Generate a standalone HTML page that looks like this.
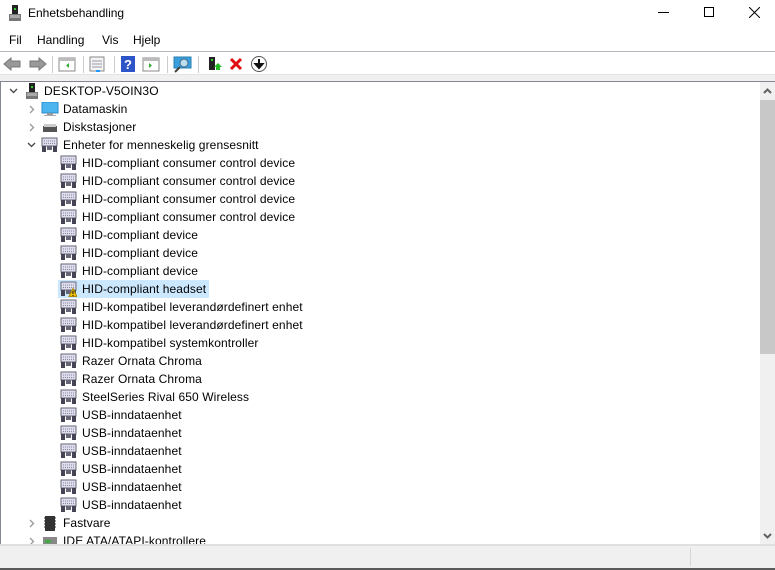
<!DOCTYPE html><html><head><style>
*{margin:0;padding:0;box-sizing:border-box}
body{width:775px;height:570px;overflow:hidden;background:#fff;font-family:"Liberation Sans",sans-serif;font-size:12px;color:#000;position:relative}
.a{position:absolute}
.row{position:absolute;height:18px;line-height:18px;white-space:nowrap;letter-spacing:0.1px}
</style></head><body>
<svg class="a" style="left:7px;top:5px" width="16" height="18"><rect x="5" y="0" width="6" height="9" fill="#222"/><rect x="7" y="3" width="2" height="2" fill="#3c3"/><rect x="2" y="9" width="12" height="7" fill="#777"/><rect x="3" y="10" width="10" height="3" fill="#aaa"/></svg>
<div class="a" style="left:28px;top:6px;font-size:12px">Enhetsbehandling</div>
<div class="a" style="left:658px;top:12px;width:11px;height:1px;background:#000"></div>
<div class="a" style="left:704px;top:7px;width:10px;height:10px;border:1px solid #000"></div>
<svg class="a" style="left:749px;top:7px" width="11" height="11"><path d="M0 0L11 11M11 0L0 11" stroke="#000" stroke-width="1"/></svg>
<div class="a" style="left:9px;top:33px">Fil</div>
<div class="a" style="left:37px;top:33px">Handling</div>
<div class="a" style="left:102px;top:33px">Vis</div>
<div class="a" style="left:133px;top:33px">Hjelp</div>
<div class="a" style="left:0;top:51px;width:775px;height:1px;background:#b5b9bf"></div>
<svg class="a" style="left:3px;top:55px" width="270" height="18">
<path d="M1 9L8 3V6H17V12H8V15Z" fill="#999" stroke="#777"/>
<path d="M43 9L36 3V6H27V12H36V15Z" fill="#999" stroke="#777"/>
<line x1="49.5" y1="1" x2="49.5" y2="18" stroke="#ccc"/>
<rect x="56" y="3" width="16" height="13" fill="#fff" stroke="#888"/><rect x="56" y="3" width="16" height="3" fill="#bbb"/><path d="M66 8L63 10.5L66 13Z" fill="#3a3"/>
<line x1="80.5" y1="1" x2="80.5" y2="18" stroke="#ccc"/>
<rect x="87" y="2" width="14" height="14" fill="#f4f4f4" stroke="#888"/><path d="M89 6H99M89 9H99M89 12H99" stroke="#99a"/><rect x="93" y="15" width="4" height="2" fill="#29f"/>
<line x1="111.5" y1="1" x2="111.5" y2="18" stroke="#ccc"/>
<rect x="118" y="1" width="14" height="16" fill="#2e55c7"/><text x="121" y="14" fill="#fff" font-size="13" font-weight="bold" font-family="Liberation Sans">?</text>
<rect x="140" y="3" width="16" height="13" fill="#fff" stroke="#888"/><rect x="140" y="3" width="16" height="3" fill="#bbb"/><path d="M146 8L149 10.5L146 13Z" fill="#3a3"/>
<line x1="164.5" y1="1" x2="164.5" y2="18" stroke="#ccc"/>
<rect x="171" y="2" width="17" height="11" fill="#3aa0dd" stroke="#2a7fb0"/><circle cx="181" cy="8" r="4" fill="#bde" stroke="#468"/><path d="M177 12L172 17" stroke="#444" stroke-width="2"/>
<line x1="195.5" y1="1" x2="195.5" y2="18" stroke="#ccc"/>
<rect x="206" y="2" width="6" height="13" fill="#222"/><rect x="208" y="4" width="2" height="2" fill="#3c3"/><path d="M211 12L215 8L219 12Z M213 12H217V15H213Z" fill="#2b2"/>
<path d="M228 4L238 14M238 4L228 14" stroke="#e01010" stroke-width="3"/>
<circle cx="256" cy="9" r="7.5" fill="#fff" stroke="#555"/><path d="M256 4V10M252.5 9L256 13L259.5 9Z" stroke="#111" stroke-width="2" fill="#111"/>
</svg>
<div class="a" style="left:0;top:74px;width:775px;height:7px;background:#f0f0f0;border-top:1px solid #e3e3e3"></div>
<div class="a" style="left:0;top:81px;width:775px;height:1px;background:#828790"></div>
<div class="a" style="left:0;top:82px;width:1px;height:462px;background:#828790"></div>
<div class="a" style="left:760px;top:82px;width:15px;height:462px;background:#f0f0f0"></div>
<div class="a" style="left:760px;top:100px;width:15px;height:254px;background:#c8c8c8"></div>
<svg class="a" style="left:763px;top:87px" width="9" height="8"><path d="M1 6L4.5 2.5L8 6" stroke="#606060" stroke-width="2" fill="none"/></svg>
<svg class="a" style="left:763px;top:532px" width="9" height="8"><path d="M1 2L4.5 5.5L8 2" stroke="#606060" stroke-width="2" fill="none"/></svg>
<div class="a" style="left:0;top:544px;width:775px;height:24px;background:#f0f0f0;border-top:2px solid #e0e0e0"></div>
<div class="a" style="left:690px;top:548px;width:1px;height:18px;background:#d6d6d6"></div>
<div class="a" style="left:0;top:568px;width:775px;height:2px;background:#5a5a5a"></div>
<div class="a" style="left:1px;top:82px;width:759px;height:462px;overflow:hidden">
<svg class="a" style="left:8px;top:6px" width="9" height="6"><path d="M1 1L4.5 4.5L8 1" stroke="#444" stroke-width="1.3" fill="none"/></svg>
<svg class="a" style="left:23px;top:1px" width="16" height="17"><rect x="5" y="0" width="6" height="9" fill="#222"/><rect x="7" y="3" width="2" height="2" fill="#3c3"/><rect x="2" y="9" width="12" height="7" fill="#777"/><rect x="3" y="10" width="10" height="3" fill="#aaa"/></svg>
<div class="row" style="left:43px;top:0">DESKTOP-V5OIN3O</div>
<svg class="a" style="left:28px;top:23px" width="6" height="9"><path d="M1 1L4.5 4.5L1 8" stroke="#999" stroke-width="1.3" fill="none"/></svg>
<svg class="a" style="left:40px;top:20px" width="18" height="15"><rect x="1" y="0" width="16" height="11" fill="#4cb4ee" stroke="#2a8bcb"/><rect x="6" y="11" width="6" height="2" fill="#999"/><rect x="3" y="13" width="12" height="1" fill="#aaa"/></svg>
<div class="row" style="left:62px;top:18px">Datamaskin</div>
<svg class="a" style="left:28px;top:41px" width="6" height="9"><path d="M1 1L4.5 4.5L1 8" stroke="#999" stroke-width="1.3" fill="none"/></svg>
<svg class="a" style="left:41px;top:41px" width="16" height="10"><rect x="1" y="3" width="14" height="6" fill="#555"/><rect x="2" y="1" width="12" height="3" fill="#ccc"/></svg>
<div class="row" style="left:62px;top:36px">Diskstasjoner</div>
<svg class="a" style="left:26px;top:60px" width="9" height="6"><path d="M1 1L4.5 4.5L8 1" stroke="#444" stroke-width="1.3" fill="none"/></svg>
<div class="row" style="left:62px;top:54px">Enheter for menneskelig grensesnitt</div>
<div class="row" style="left:57px;top:198px;width:151px;background:#cce8ff"></div>
<svg class="a" style="left:28px;top:437px" width="6" height="9"><path d="M1 1L4.5 4.5L1 8" stroke="#999" stroke-width="1.3" fill="none"/></svg>
<svg class="a" style="left:43px;top:434px" width="12" height="15"><rect x="1" y="0" width="10" height="15" fill="#333"/><path d="M0 2H1M0 5H1M0 8H1M0 11H1M11 2H12M11 5H12M11 8H12M11 11H12" stroke="#333"/></svg>
<div class="row" style="left:62px;top:432px">Fastvare</div>
<svg class="a" style="left:28px;top:455px" width="6" height="9"><path d="M1 1L4.5 4.5L1 8" stroke="#999" stroke-width="1.3" fill="none"/></svg>
<svg class="a" style="left:41px;top:454px" width="16" height="10"><rect x="1" y="1" width="14" height="9" fill="#888"/><rect x="3" y="4" width="6" height="3" fill="#4a4"/></svg>
<div class="row" style="left:62px;top:450px">IDE ATA/ATAPI-kontrollere</div>
<div id="items"></div>
</div>
<script>
var n=["HID-compliant consumer control device","HID-compliant consumer control device","HID-compliant consumer control device","HID-compliant consumer control device","HID-compliant device","HID-compliant device","HID-compliant device","HID-compliant headset","HID-kompatibel leverandørdefinert enhet","HID-kompatibel leverandørdefinert enhet","HID-kompatibel systemkontroller","Razer Ornata Chroma","Razer Ornata Chroma","SteelSeries Rival 650 Wireless","USB-inndataenhet","USB-inndataenhet","USB-inndataenhet","USB-inndataenhet","USB-inndataenhet","USB-inndataenhet"];
function ic(x,y,w){return '<svg class="a" style="left:'+x+'px;top:'+y+'px" width="17" height="16"><rect x="1" y="1" width="15" height="8" fill="#dde" stroke="#667"/><path d="M3 4H14M3 6.5H14" stroke="#889" stroke-dasharray="1 1"/><rect x="1" y="9" width="4" height="6" fill="#445"/><rect x="12" y="9" width="4" height="6" fill="#445"/><rect x="6" y="9" width="5" height="4" fill="#667"/>'+(w?'<path d="M9 15.5L13 7.5L17 15.5Z" fill="#f5c400" stroke="#a80"/><rect x="12.5" y="10" width="1" height="3" fill="#000"/><rect x="12.5" y="14" width="1" height="1" fill="#000"/>':'')+'</svg>';}
var h=ic(40,55,0);
for(var i=0;i<n.length;i++){var y=72+i*18;h+=ic(59,y+1,i==7)+'<div class="row" style="left:81px;top:'+y+'px">'+n[i]+'</div>';}
document.getElementById('items').innerHTML=h;
</script>
</body></html>
